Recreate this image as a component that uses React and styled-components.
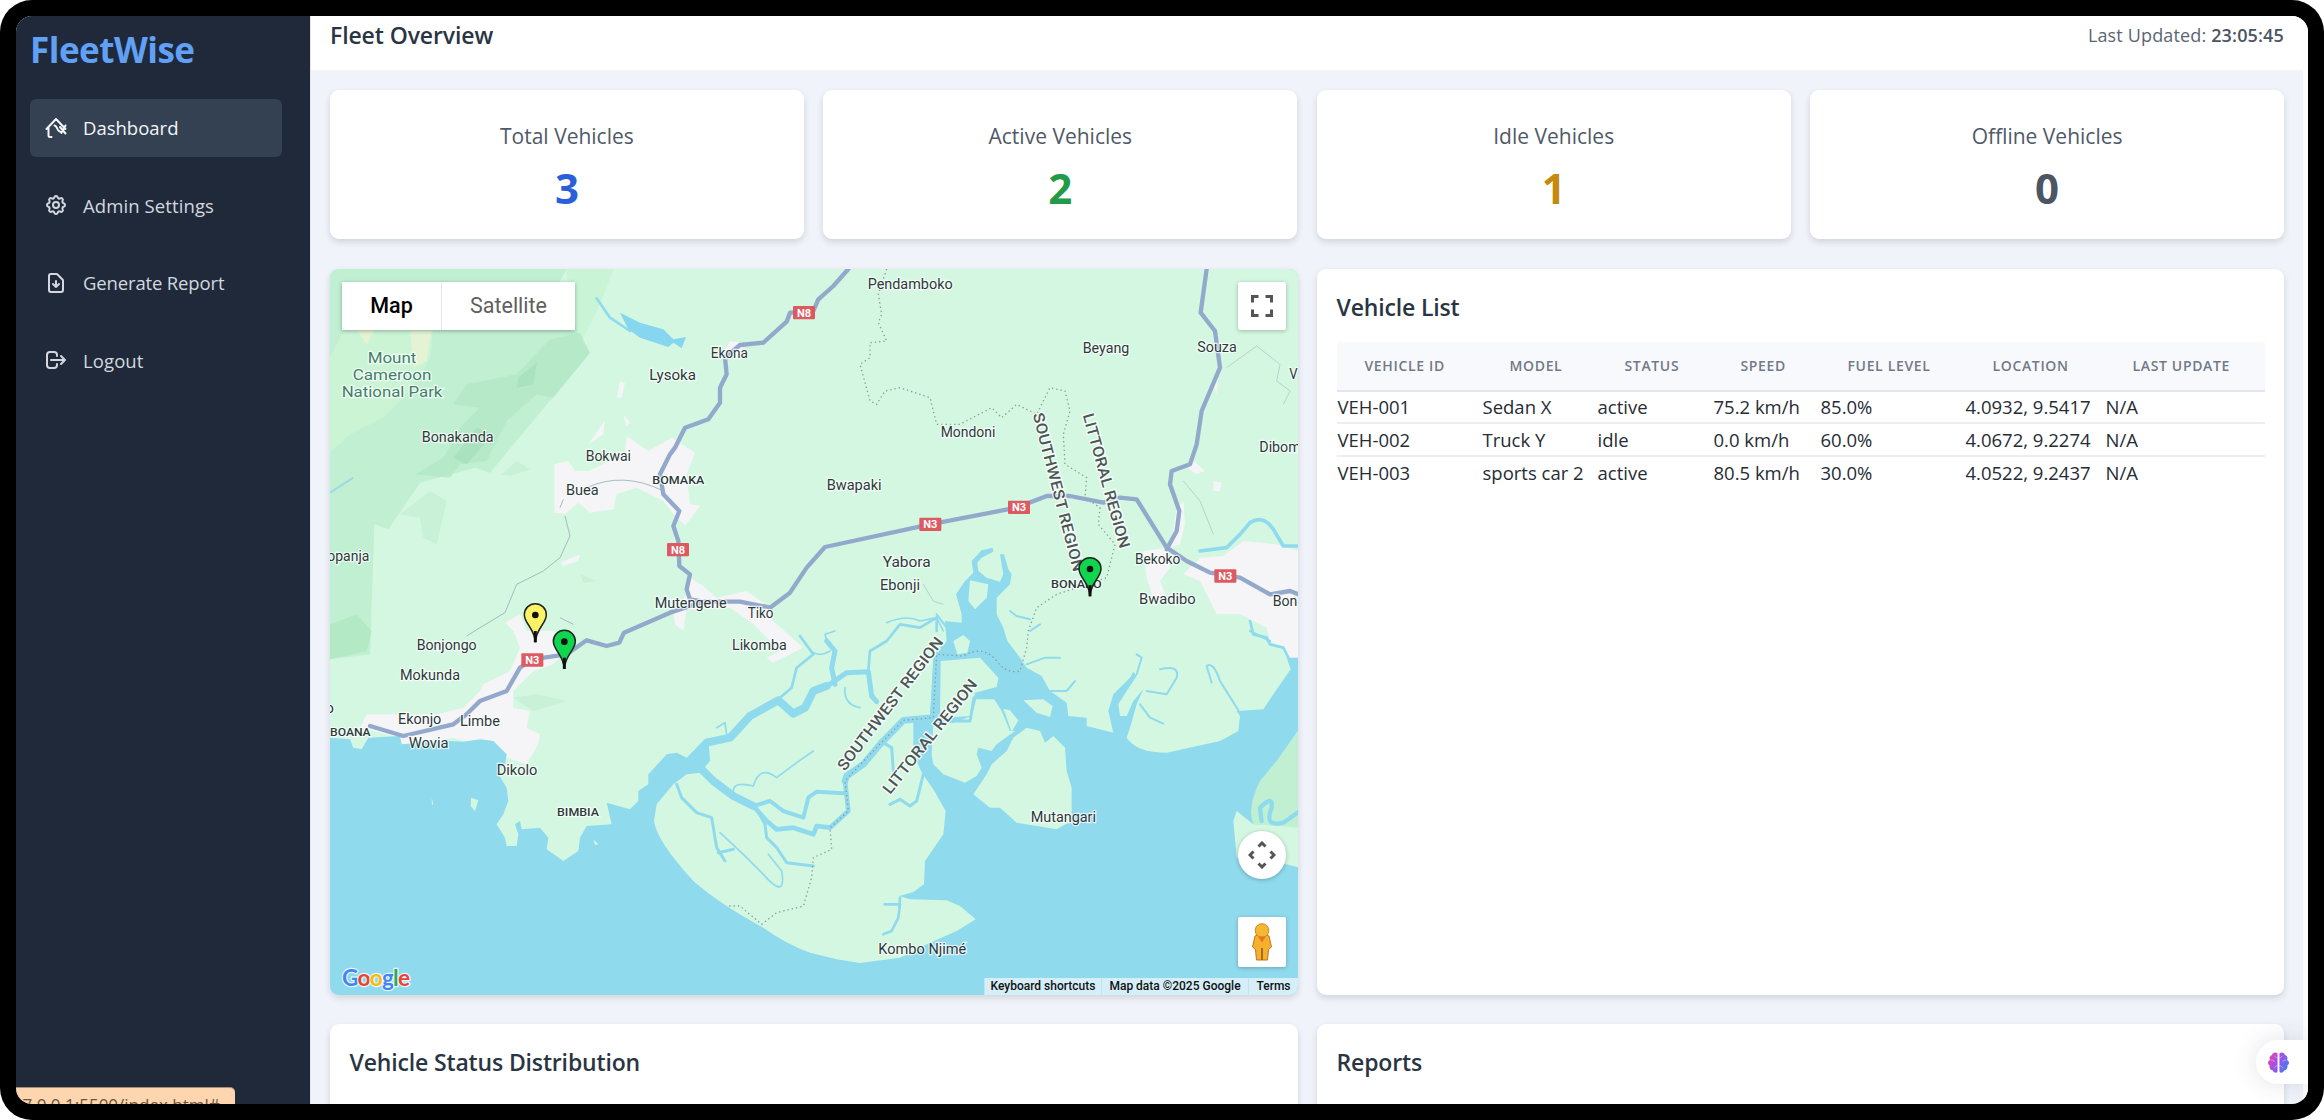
import React from 'react';
import styled, { createGlobalStyle } from 'styled-components';
import { HiOutlineCog, HiOutlineDocumentDownload, HiOutlineLogout } from 'react-icons/hi';

const GlobalStyle = createGlobalStyle`
  *, *::before, *::after { box-sizing: border-box; }
  body { margin: 0; background: #fff; font-family: "Open Sans", "Noto Sans", sans-serif; }
  h1, h2, h3, p { margin: 0; }
`;

const Bezel = styled.div`
  width: 2324px;
  height: 1120px;
  padding: 16px;
  background: #000;
  border-radius: 32px;
  overflow: hidden;
`;

const Screen = styled.div`
  position: relative;
  display: flex;
  height: 1088px;
  border-radius: 16px;
  overflow: hidden;
  background: #f0f3f9;
`;

const Sidebar = styled.aside`
  flex: none;
  width: 295px;
  padding: 13px 14px;
  background: #1f293a;
  border-right: 1px solid #e4e7ec;
`;

const Brand = styled.h1`
  margin-bottom: 27.5px;
  font-size: 35px;
  font-weight: 700;
  line-height: 42px;
  letter-spacing: -0.5px;
  color: #60a0f5;
`;

const Nav = styled.nav`
  display: flex;
  flex-direction: column;
  gap: 19.5px;
`;

const NavItem = styled.a`
  display: flex;
  align-items: center;
  gap: 15px;
  width: 252px;
  height: 58px;
  padding-left: 14px;
  border-radius: 6px;
  background: ${(p) => (p.$active ? '#334153' : 'transparent')};
  color: ${(p) => (p.$active ? '#f3f5f8' : '#d3d8df')};
  font-size: 18.5px;
  letter-spacing: ${(p) => p.$track || 0}px;
  svg { flex: none; width: 24px; height: 24px; }
`;

const Main = styled.main`
  flex: none;
  width: 1992px;
  display: flex;
  flex-direction: column;
`;

const Header = styled.header`
  flex: none;
  display: flex;
  justify-content: space-between;
  height: 55px;
  padding: 1px 19px 0 19px;
  background: #fff;
  border-bottom: 1px solid #f3f5f8;
`;

const PageTitle = styled.h2`
  font-size: 23px;
  font-weight: 600;
  line-height: 36px;
  letter-spacing: -0.1px;
  color: #2a3544;
`;

const Updated = styled.p`
  font-size: 18px;
  line-height: 36px;
  letter-spacing: 0.15px;
  color: #5b6574;
  b { font-weight: 600; color: #4b5563; }
`;

const Content = styled.div`
  display: flex;
  flex-direction: column;
  gap: 29.5px;
  padding: 19px 19px 0;
`;

const StatGrid = styled.section`
  display: grid;
  grid-template-columns: repeat(4, 1fr);
  gap: 19.6px;
`;

const Card = styled.section`
  background: #fff;
  border-radius: 9px;
  box-shadow: 0 3px 6px rgba(30, 40, 60, 0.15);
`;

const StatCard = styled(Card)`
  height: 149px;
  padding-top: 28px;
  text-align: center;
`;

const StatLabel = styled.h3`
  font-size: 21px;
  font-weight: 500;
  line-height: 36px;
  color: #4f5967;
`;

const StatValue = styled.p`
  font-size: 42px;
  font-weight: 700;
  line-height: 68px;
  color: ${(p) => p.$color};
`;

const Columns = styled.div`
  display: grid;
  grid-template-columns: 968px 967px;
  justify-content: space-between;
`;

const MapPanel = styled(Card)`
  position: relative;
  height: 726px;
  overflow: hidden;
  background: #90daee;
  > svg { display: block; width: 968px; height: 726px; }
`;

const MapTypes = styled.div`
  position: absolute;
  top: 13px;
  left: 12px;
  display: flex;
  height: 48px;
  background: #fff;
  box-shadow: 0 1px 4px rgba(0, 0, 0, 0.3);
`;

const MapType = styled.button`
  width: ${(p) => p.$w}px;
  padding: 0;
  border: 0;
  border-left: ${(p) => (p.$active ? '0' : '1px solid #e6e6e6')};
  background: none;
  font: ${(p) => (p.$active ? 500 : 400)} 21.5px Roboto, sans-serif;
  color: ${(p) => (p.$active ? '#000' : '#5f5f5f')};
`;

const MapControl = styled.button`
  position: absolute;
  top: ${(p) => p.$top}px;
  right: 12px;
  display: grid;
  place-items: center;
  width: 48px;
  height: ${(p) => p.$h || 48}px;
  padding: 0;
  border: 0;
  border-radius: ${(p) => (p.$round ? '50%' : '2px')};
  background: #fff;
  box-shadow: 0 1px 4px rgba(0, 0, 0, 0.25);
`;

const Attribution = styled.div`
  position: absolute;
  right: 0;
  bottom: 0;
  display: flex;
  height: 17px;
  font: 500 12px/17px Roboto, sans-serif;
  color: #111;
`;

const Credit = styled.span`
  width: ${(p) => p.$w}px;
  text-align: center;
  background: #d5eef7;
  border-left: 1px solid #c3e4ef;
`;

const ListPanel = styled(Card)`
  height: 726px;
  padding: 20px 19.5px;
`;

const PanelTitle = styled.h3`
  font-size: 23px;
  font-weight: 600;
  line-height: 36px;
  letter-spacing: -0.15px;
  color: #2a3544;
`;

const Table = styled.table`
  width: 928px;
  margin-top: 17px;
  border-collapse: collapse;
  table-layout: fixed;
  thead tr { height: 49px; background: #f8f9fc; border-bottom: 2px solid #e3e6eb; }
  tbody tr { height: 32.8px; }
  tbody tr + tr { border-top: 2px solid #eceef1; }
`;

const Th = styled.th`
  width: ${(p) => p.$w}px;
  padding: 0 0 0 28px;
  text-align: left;
  font-size: 14px;
  font-weight: 600;
  line-height: 20px;
  letter-spacing: 0.65px;
  color: #717a88;
  white-space: nowrap;
`;

const Td = styled.td`
  padding: 0 0 0 1px;
  font-size: 18.5px;
  line-height: 26px;
  color: #262c35;
  white-space: nowrap;
`;

const BottomPanel = styled(Card)`
  height: 120px;
  padding: 20px 19.5px;
`;

const ScrollTrack = styled.div`
  width: 5px;
  background: #fcfdfe;
`;

const StatusBubble = styled.div`
  position: absolute;
  left: 0;
  bottom: 0;
  width: 219px;
  height: 17px;
  overflow: hidden;
  border-top: 1px solid #a58d78;
  border-top-right-radius: 5px;
  background: #fdd5ae;
  color: #6b5440;
  font-size: 17px;
  line-height: 35px;
  white-space: nowrap;
  span { display: block; margin: -1px 0 0 -13px; }
`;

const Assistant = styled.button`
  position: absolute;
  right: 0;
  bottom: 20px;
  display: flex;
  align-items: center;
  width: 52px;
  height: 44px;
  padding: 0 0 0 11px;
  border: 0;
  border-radius: 22px 0 0 22px;
  background: #fff;
  box-shadow: 0 0 24px rgba(60, 60, 100, 0.14);
`;

const WATER = '#90daee';
const LAND = '#d3f7e1';
const URBAN = '#f5f4f6';
const ROAD = '#93a9cb';

const HomeIcon = () => (
  <svg viewBox="0 0 24 24" fill="none" stroke="currentColor" strokeWidth="2" strokeLinecap="round" strokeLinejoin="round">
    <path d="M2.500 13L12 3l9.500 10M4.500 11.500v8a1.500 1.500 0 001.500 1.500h1.500M10.500 9.500c1.500 0 2 1.500 3.500 4.500 1.500 2.500 3.500 1 3.500 3M16 11l5.500 6.500M21.500 9.500l-3 6" />
  </svg>
);

const BrainIcon = () => (
  <svg width="23" height="23" viewBox="0 0 24 24">
    <defs>
      <linearGradient id="brain" x1="0" y1="0" x2="1" y2="0.600">
        <stop offset="0" stopColor="#f0508c" />
        <stop offset="0.450" stopColor="#b04ae0" />
        <stop offset="1" stopColor="#4a7af0" />
      </linearGradient>
    </defs>
    <path fill="url(#brain)" d="M11 2.500C9 .5 5.500 1.500 5.300 4.300 2.800 5 2 7.500 3.200 9.300.4 10.500.4 14 2.800 15.200 2 18 3.800 20 5.800 20.200 7 23 10 23.500 11 21.500zM13 2.500c2-2 5.500-1 5.700 1.800 2.500.7 3.300 3.200 2.100 5 2.800 1.200 2.800 4.700.4 5.900.8 2.800-1 4.800-3 5-1.200 2.800-4.200 3.300-5.200 1.300z" />
    <path fill="none" stroke="#fff" strokeOpacity=".4" strokeWidth="1" d="M4 9.500c2-.5 3.500.5 3.500 2M11 7c-1.500 0-2.500-.5-3-2M11 15.500c-2 0-3 1-3.500 2.500M20 9.500c-2-.5-3.500.5-3.500 2M13 7c1.500 0 2.500-.5 3-2M13 15.500c2 0 3 1 3.500 2.500" />
  </svg>
);

const Place = ({ x, y, w, children, size = 42, color = '#2c3a3a', caps }) => (
  <text
    x={x}
    y={y}
    textLength={w}
    lengthAdjust="spacingAndGlyphs"
    fontSize={size}
    fontWeight={caps ? 500 : 400}
    fill={color}
    stroke="#fff"
    strokeOpacity=".75"
    strokeWidth="7"
    paintOrder="stroke"
  >
    {children}
  </text>
);

const Shield = ({ x, y, children }) => (
  <g>
    <rect x={x - 33} y={y - 20} width="66" height="40" rx="3" fill="#dc5a60" />
    <text x={x} y={y + 12} textAnchor="middle" fontSize="33" fontWeight="700" fill="#fff">{children}</text>
  </g>
);

const Pin = ({ x, y, fill }) => (
  <g transform={`translate(${x} ${y})`}>
    <path d="M0 82C-2 40-33 26-33-1a33 33 0 0166 0C33 26 2 40 0 82z" fill={fill} stroke="#222" strokeWidth="4.500" />
    <path d="M0 48v34" stroke="#111" strokeWidth="9" />
    <circle r="10" fill="#111" />
  </g>
);

const Region = ({ x, y, angle, w, children }) => (
  <text
    transform={`translate(${x} ${y}) rotate(${angle})`}
    textLength={w}
    lengthAdjust="spacingAndGlyphs"
    fontSize="46"
    fontWeight="500"
    fill="#4c5655"
    stroke="#fff"
    strokeOpacity=".8"
    strokeWidth="8"
    paintOrder="stroke"
  >
    {children}
  </text>
);

const MapCanvas = () => (
  <svg viewBox="30 24 2904 2178" fontFamily="Roboto, sans-serif">
    <rect x="30" y="24" width="2904" height="2178" fill={LAND} />

    {/* national park and forest */}
    <path fill="#c0f0d1" d="M30 24H740L720 60L790 250L810 275L510 635L465 620L300 665L205 805L163 790L150 1180L30 1195z" />
    <path fill="#caf4d6" d="M740 24H880L840 130L785 240L745 110z" />
    <path fill="#cbf4d5" d="M30 290L75 200H340L330 290L270 390L190 470L90 520L30 575z" />
    <path fill="#e3f3d3" d="M270 210H335L320 300L280 320zM110 205H165L140 250z" />
    <path fill="#aee5c1" d="M590 340L690 235L780 215L810 275L700 410L650 400L560 480L500 600L420 610L390 650L285 640L370 590L420 500L480 440L400 430L440 370z" opacity=".6" />
    <path fill="#9fdab5" d="M595 350L650 305L640 370L590 380zM400 590L470 500L520 520L440 610z" opacity=".5" />
    <path fill="#bdebcd" d="M240 760L330 690L380 720L350 850L310 830L300 770z" opacity=".5" />
    <path fill="#aee5c1" d="M30 1090L110 1060L155 1110L140 1170L30 1195z" opacity=".7" />
    <path fill="#bdebcd" d="M545 640L590 600L630 625L570 645zM780 940L830 960L790 965zM580 1310L650 1300L740 1320L640 1350z" opacity=".5" />

    {/* towns */}
    <g fill={URBAN}>
      <path d="M703 610L745 600L765 630L805 630L915 580L920 525L985 570L1055 530L1125 575L1100 640L1110 730L1140 735L1095 795L1060 760L1030 720L950 680L890 700L880 745L810 755L775 725L735 760L703 755z" />
      <path d="M890 410L900 362L915 365L905 410zM805 550L855 478L850 520zM910 460L930 485L918 495zM720 905L780 880L775 900L730 915z" />
      <path d="M1110 950L1150 975L1190 1010L1280 990L1350 1040L1360 1080L1450 1160L1360 1205L1340 1190L1380 1170L1300 1090L1230 1040L1100 1045L1090 1110L1065 1090L1060 1050L1100 1000z" />
      <path d="M555 1085L600 1060L620 1110L700 1110L760 1150L700 1210L640 1230L580 1290L580 1340L630 1350L620 1400L660 1420L655 1450L620 1510L560 1490L520 1440L430 1440L400 1430L245 1450L240 1430L120 1400L140 1360L350 1360L430 1340L480 1290L490 1270L570 1230L600 1160L580 1110z" />
      <path d="M2640 890L2710 885L2770 840L2870 850L2940 870V1195L2900 1190L2885 1160L2850 1140L2840 1100L2760 1060L2690 1060L2640 960L2590 940zM2470 870L2540 860L2550 920L2520 960L2545 1020L2500 1015L2480 950z" />
      <path d="M2570 740L2590 720L2595 790L2580 850L2550 860zM2610 590L2655 630L2625 640L2605 620zM2680 660L2705 665L2700 690L2680 690zM2680 370L2695 350L2690 400z" />
      <path d="M1230 240L1270 245L1260 290L1210 280z" />
    </g>

    {/* open sea */}
    <path
      fill={WATER}
      d="M30 1430L90 1435L100 1460L125 1465L145 1430L240 1425L245 1450L390 1440L430 1442L480 1435L520 1440L560 1480L555 1510L530 1530L560 1580L565 1620L550 1660L530 1690L555 1730L560 1755L590 1755L595 1720L585 1690L600 1680L605 1705L660 1700L685 1730L680 1765L730 1800L775 1770L780 1730L800 1695L875 1690L860 1625L930 1645L955 1620V1590L985 1570V1540L1040 1480L1070 1475L1100 1490L1140 1450L1165 1430L1170 1500L1140 1535L1100 1540L1060 1570L1010 1630L1002 1680Q1010 1740 1120 1860Q1200 1930 1330 2000Q1400 2050 1470 2075L1550 2095L1620 2106L1740 2090L1820 2050L1910 2010L1967 1975L1920 1935L1880 1918L1770 1915L1738 1905L1780 1893L1812 1870L1815 1800L1870 1720L1877 1650L1840 1585L1808 1540L1780 1480V1380L1830 1370L1840 1200L1848 1172L1880 1140L1875 1080L1925 1085L1925 1060L1908 1000L1935 960L1960 935L1955 900L1985 868L2018 860L2020 872L1985 890L1972 905L1975 930L2000 950L2040 962L2050 940L2040 880L2052 880L2065 925L2075 940L2070 970L2030 1010V1060L2050 1100L2062 1140L2100 1190L2120 1220L2165 1245L2190 1290L2240 1325L2245 1365L2300 1370V1395L2380 1415L2365 1350L2380 1300L2430 1250L2440 1232L2450 1245L2420 1290L2395 1330L2400 1365H2420L2440 1320L2470 1285L2450 1330L2430 1400L2420 1430Q2450 1475 2540 1475L2700 1440L2755 1410L2760 1365L2750 1350L2830 1345L2860 1300L2912 1225L2900 1190H2940V2210H30z"
    />
    <path fill={LAND} d="M2940 1690L2940 1820L2880 1805L2750 1790L2740 1680L2750 1650L2800 1690z" />
    <path fill="#c0f0d1" d="M2940 1400L2870 1500L2820 1560Q2780 1640 2800 1690L2940 1700z" />

    {/* delta islands */}
    <g fill={LAND}>
      <path d="M1835 1480L1840 1510L1870 1540L1935 1565L1970 1545L1985 1520L1970 1480L1975 1460L2015 1470L2030 1450L2085 1410L2070 1410L2045 1350L2020 1310L1970 1310L1955 1365L1900 1385L1840 1390z" />
      <path d="M1862 1200L1980 1190L2035 1250L2030 1278L1965 1295L1950 1365L1860 1372z" />
      <path d="M1960 1600L2010 1640L2040 1640L2090 1685L2210 1705L2255 1680V1580L2240 1530L2235 1460L2200 1425L2175 1445L2160 1410L2120 1400L2080 1430L2060 1470L2015 1510L2000 1540z" />
      <path d="M1900 1140L1930 1122L1950 1140L1942 1175L1912 1180zM2110 1318L2170 1315L2198 1335L2190 1368L2150 1355zM2050 1343L2070 1348L2095 1378L2075 1412z" />
      <path d="M1950 1038L2005 1050L2000 1090L1965 1125L1945 1100z" transform="translate(0 -80)" />
      <path d="M453 1610L475 1618L465 1650L452 1635zM335 1610L340 1630L336 1632zM820 1735L835 1750L825 1752z" />
    </g>

    {/* rivers */}
    <g fill="none" stroke={WATER} strokeLinejoin="round" strokeLinecap="round">
      <path strokeWidth="24" d="M1120 1490L1160 1445L1230 1430L1290 1365L1375 1318L1420 1358L1455 1340L1480 1290L1520 1275" />
      <path strokeWidth="15" d="M1480 1290L1525 1273L1580 1235L1645 1232L1655 1305L1670 1322M1545 1270L1535 1220L1545 1170L1520 1140" />
      <path strokeWidth="24" d="M1130 1510L1180 1560L1240 1605L1300 1635" />
      <path strokeWidth="14" d="M1300 1635L1340 1680L1370 1705L1420 1700L1480 1720L1490 1695L1530 1700L1585 1650L1575 1560" />
      <path strokeWidth="20" d="M1575 1560L1580 1545L1630 1510L1680 1450L1750 1378L1840 1370L1850 1190" />
      <path strokeWidth="12" d="M1300 1635L1350 1620L1390 1650L1450 1670L1465 1610L1490 1592L1570 1597" />
      <path strokeWidth="9" d="M1070 1570L1085 1610L1130 1655L1175 1670L1190 1760L1215 1800M1195 1775L1240 1765M1310 1645L1335 1690L1340 1730L1370 1760L1400 1805L1480 1815" />
      <path strokeWidth="9" d="M1680 1440L1715 1460L1720 1530M1860 1380H1950L1962 1310L2030 1310L2050 1340M1810 1540L1790 1620L1770 1635L1740 1615L1710 1630" />
      <path strokeWidth="8" d="M1694 1930L1740 1930L1735 1970L1715 2010L1690 2020M1740 1910L1738 1940M1645 1230L1650 1170L1700 1140L1740 1090L1800 1100L1850 1070M1440 1125L1480 1180L1430 1220L1415 1280L1380 1310" />
      <path strokeWidth="5" d="M1520 1140L1515 1120L1545 1110M1700 1085Q1760 1060 1800 1080L1850 1070L1870 1110M1240 1590Q1240 1560 1300 1575Q1320 1510 1370 1550L1430 1505L1480 1470M1200 1715L1270 1780L1330 1840Q1400 1920 1385 1830L1345 1780M1190 1400L1215 1385L1220 1420M1470 1170Q1500 1190 1530 1170M1575 1280Q1570 1330 1620 1340" />
      <path strokeWidth="6" d="M2700 1260L2755 1348M2700 1260Q2680 1200 2660 1215L2675 1265M2450 1240L2465 1190L2450 1180M2480 1290L2540 1300L2570 1250Q2580 1210 2520 1225M2460 1330L2490 1370L2530 1388M2120 1210L2175 1190L2220 1190M2190 1290L2240 1290L2265 1260M2070 1050L2090 1065L2130 1075M2130 1110L2160 1090M2790 1110L2850 1140M1850 1060L1880 1100" />
      <path strokeWidth="13" d="M2825 1680L2820 1640Q2860 1600 2855 1640Q2830 1700 2890 1685L2940 1650" />
      <path strokeWidth="11" d="M2640 870L2720 860L2760 820L2790 785Q2830 760 2860 805L2890 855H2940" />
      <path strokeWidth="8" d="M2790 1080L2800 1120L2840 1130L2850 1150L2890 1160L2905 1190M1850 1070L1850 1110M830 112L870 170L930 210" />
    </g>
    <path fill="#85d6ee" d="M900 155L960 185L1030 205L1060 235L1098 228L1085 262L1060 245L1045 258L960 230L925 205z" />
    <path stroke="#9ad9ea" strokeWidth="6" d="M30 695L100 650" />

    {/* minor roads */}
    <g fill="none" stroke="#a9b9bd" strokeWidth="3">
      <path d="M735 765L750 825L720 890L670 930L590 970L555 1055L480 1100L440 1125M720 1070L760 1090M730 715L720 740M800 680Q910 630 1030 690" />
      <path d="M2720 320L2810 255L2880 310L2870 360L2910 390L2890 430M2590 660L2640 720L2680 820M1810 970L1840 1020L1870 1030" stroke="#b9d3c9" />
    </g>

    {/* regional boundary */}
    <g fill="none" stroke="#8b9a9b" strokeWidth="4" strokeDasharray="4 9">
      <path d="M1700 24L1675 100L1685 160L1675 185L1700 240L1650 245V290L1620 310L1650 420L1670 430L1695 390L1740 380L1830 410L1850 490H1920L2015 440L2045 470L2090 430L2150 460L2190 380L2235 390L2250 450L2230 520L2235 610L2300 650L2295 710L2340 740L2335 790L2385 850L2360 950L2210 1000L2150 1040L2125 1110L2120 1160L2100 1230Q2060 1240 2030 1200Q1990 1150 1930 1185L1850 1180L1840 1370L1750 1378L1640 1490L1575 1560L1585 1650L1530 1700L1535 1765L1480 1790L1475 1850L1450 1935L1370 1955L1325 1990L1260 1935H1220" />
    </g>

    {/* national roads */}
    <g fill="none" stroke={ROAD} strokeWidth="13" strokeLinejoin="round" strokeLinecap="round">
      <path d="M1585 24L1540 75L1495 115L1480 150L1410 155L1400 182L1330 245L1260 252L1215 290L1220 340L1200 380V425L1165 475L1095 500L1065 560L1050 580L1020 640L1030 700L1078 750L1060 795L1075 840L1078 915L1110 940L1100 985L1110 1015L1150 1022" />
      <path d="M150 1395L250 1425L400 1390L440 1360L480 1320L560 1290L600 1220L635 1195L740 1180L800 1138L860 1155L898 1145L912 1115L1050 1055L1150 1022H1260L1350 1040L1410 995L1460 920L1515 858L1830 790L2090 740L2180 705L2250 705L2350 725L2400 710L2450 715L2540 860L2600 900L2670 935L2760 950L2850 1000L2910 990L2935 1000" />
      <path d="M2660 24L2642 155L2685 210L2700 320L2645 450L2630 550L2610 610L2555 630L2550 670L2578 750L2570 810L2540 865" />
    </g>

    <Shield x={1452} y={155}>N8</Shield>
    <Shield x={1074} y={866}>N8</Shield>
    <Shield x={1831} y={790}>N3</Shield>
    <Shield x={2097} y={739}>N3</Shield>
    <Shield x={2716} y={945}>N3</Shield>
    <Shield x={637} y={1197}>N3</Shield>

    <Place x={143} y={306} w={146} size={44} color="#3f7f6a">Mount</Place>
    <Place x={98} y={357} w={236} size={44} color="#3f7f6a">Cameroon</Place>
    <Place x={65} y={409} w={302} size={44} color="#3f7f6a">National Park</Place>
    <Place x={305} y={542} w={216}>Bonakanda</Place>
    <Place x={988} y={356} w={140}>Lysoka</Place>
    <Place x={1172} y={290} w={112}>Ekona</Place>
    <Place x={797} y={600} w={136}>Bokwai</Place>
    <Place x={738} y={703} w={98}>Buea</Place>
    <Place x={997} y={668} w={156} size={34} caps>BOMAKA</Place>
    <Place x={22} y={899} w={126}>opanja</Place>
    <Place x={1004} y={1040} w={216}>Mutengene</Place>
    <Place x={1283} y={1072} w={77}>Tiko</Place>
    <Place x={1643} y={84} w={255}>Pendamboko</Place>
    <Place x={2288} y={277} w={140}>Beyang</Place>
    <Place x={2632} y={274} w={118}>Souza</Place>
    <Place x={2908} y={355} w={25}>V</Place>
    <Place x={1862} y={529} w={164}>Mondoni</Place>
    <Place x={2818} y={574} w={124}>Dibom</Place>
    <Place x={1520} y={687} w={165}>Bwapaki</Place>
    <Place x={1688} y={917} w={144}>Yabora</Place>
    <Place x={1680} y={986} w={120}>Ebonji</Place>
    <Place x={2193} y={982} w={152} size={34} caps>BONABO</Place>
    <Place x={2445} y={908} w={136}>Bekoko</Place>
    <Place x={2457} y={1028} w={170}>Bwadibo</Place>
    <Place x={2858} y={1036} w={74}>Bon</Place>
    <Place x={290} y={1168} w={180}>Bonjongo</Place>
    <Place x={240} y={1258} w={180}>Mokunda</Place>
    <Place x={16} y={1355} w={26}>o</Place>
    <Place x={234} y={1390} w={130}>Ekonjo</Place>
    <Place x={420} y={1395} w={120}>Limbe</Place>
    <Place x={30} y={1424} w={122} size={34} caps>BOANA</Place>
    <Place x={266} y={1462} w={120}>Wovia</Place>
    <Place x={530} y={1541} w={122}>Dikolo</Place>
    <Place x={711} y={1665} w={126} size={34} caps>BIMBIA</Place>
    <Place x={1236} y={1168} w={164}>Likomba</Place>
    <Place x={2132} y={1682} w={196}>Mutangari</Place>
    <Place x={1675} y={2079} w={264}>Kombo Njimé</Place>

    <Region x={2138} y={460} angle={75.5} w={490}>SOUTHWEST REGION</Region>
    <Region x={2288} y={462} angle={74.5} w={418}>LITTORAL REGION</Region>
    <Region x={1574} y={1532} angle={-52.5} w={490}>SOUTHWEST REGION</Region>
    <Region x={1710} y={1602} angle={-51.5} w={424}>LITTORAL REGION</Region>

    <Pin x={646} y={1062} fill="#fbf266" />
    <Pin x={733} y={1142} fill="#0fd54f" />
    <Pin x={2310} y={924} fill="#0fd54f" />

    <text x="66" y="2174" fontFamily="Lato, sans-serif" fontSize="68" fontWeight="700" textLength="204" stroke="#fff" strokeOpacity=".8" strokeWidth="7" paintOrder="stroke">
      <tspan fill="#4285f4">G</tspan>
      <tspan fill="#ea4335">o</tspan>
      <tspan fill="#fbbc05">o</tspan>
      <tspan fill="#4285f4">g</tspan>
      <tspan fill="#34a853">l</tspan>
      <tspan fill="#ea4335">e</tspan>
    </text>
  </svg>
);

const stats = [
  ['Total Vehicles', '3', '#2b5fd9'],
  ['Active Vehicles', '2', '#229a4a'],
  ['Idle Vehicles', '1', '#c48a10'],
  ['Offline Vehicles', '0', '#4b5563'],
];

const columns = [
  ['Vehicle ID', 145],
  ['Model', 115],
  ['Status', 116],
  ['Speed', 107],
  ['Fuel Level', 145],
  ['Location', 140],
  ['Last Update', 160],
];

const vehicles = [
  ['VEH-001', 'Sedan X', 'active', '75.2 km/h', '85.0%', '4.0932, 9.5417', 'N/A'],
  ['VEH-002', 'Truck Y', 'idle', '0.0 km/h', '60.0%', '4.0672, 9.2274', 'N/A'],
  ['VEH-003', 'sports car 2', 'active', '80.5 km/h', '30.0%', '4.0522, 9.2437', 'N/A'],
];

export default function App() {
  return (
    <>
      <GlobalStyle />
      <Bezel>
        <Screen>
          <Sidebar>
            <Brand>FleetWise</Brand>
            <Nav>
              <NavItem $active><HomeIcon />Dashboard</NavItem>
              <NavItem $track={0.1}><HiOutlineCog />Admin Settings</NavItem>
              <NavItem $track={-0.15}><HiOutlineDocumentDownload />Generate Report</NavItem>
              <NavItem $track={0.1}><HiOutlineLogout />Logout</NavItem>
            </Nav>
          </Sidebar>
          <Main>
            <Header>
              <PageTitle>Fleet Overview</PageTitle>
              <Updated>Last Updated: <b>23:05:45</b></Updated>
            </Header>
            <Content>
              <StatGrid>
                {stats.map(([label, value, color]) => (
                  <StatCard key={label}>
                    <StatLabel>{label}</StatLabel>
                    <StatValue $color={color}>{value}</StatValue>
                  </StatCard>
                ))}
              </StatGrid>
              <Columns>
                <MapPanel>
                  <MapCanvas />
                  <MapTypes>
                    <MapType $active $w={99}>Map</MapType>
                    <MapType $w={134}>Satellite</MapType>
                  </MapTypes>
                  <MapControl $top={13}>
                    <svg width="22" height="22" viewBox="0 0 22 22" fill="none" stroke="#555" strokeWidth="3">
                      <path d="M1.500 7.500v-6h6M14.500 1.500h6v6M20.500 14.500v6h-6M7.500 20.500h-6v-6" />
                    </svg>
                  </MapControl>
                  <MapControl $top={562} $round>
                    <svg width="28" height="28" viewBox="0 0 28 28" fill="none" stroke="#555" strokeWidth="3">
                      <path d="M10.500 5.500L14 2l3.500 3.500M10.500 22.500L14 26l3.500-3.500M5.500 10.500L2 14l3.500 3.500M22.500 10.500L26 14l-3.500 3.500" />
                    </svg>
                  </MapControl>
                  <MapControl $top={648} $h={50}>
                    <svg width="20" height="38" viewBox="0 0 20 38">
                      <path d="M3 13q7-4 14 0l2.500 11-3 2.500L15.500 37h-11L3.500 26.500.5 24z" fill="#f5b02e" stroke="#b97a1c" strokeWidth="1" />
                      <path d="M10 25v12" stroke="#8a5a1a" strokeWidth="1.500" />
                      <circle cx="10" cy="7.500" r="6.800" fill="#f7b733" stroke="#c98a22" strokeWidth="1" />
                      <path d="M6 13.500h8l-4 6z" fill="#e8761f" />
                    </svg>
                  </MapControl>
                  <Attribution>
                    <Credit $w={117}>Keyboard shortcuts</Credit>
                    <Credit $w={147}>Map data ©2025 Google</Credit>
                    <Credit $w={50}>Terms</Credit>
                  </Attribution>
                </MapPanel>
                <ListPanel>
                  <PanelTitle>Vehicle List</PanelTitle>
                  <Table>
                    <thead>
                      <tr>{columns.map(([name, w]) => <Th key={name} $w={w}>{name.toUpperCase()}</Th>)}</tr>
                    </thead>
                    <tbody>
                      {vehicles.map((row) => (
                        <tr key={row[0]}>{row.map((cell, i) => <Td key={i}>{cell}</Td>)}</tr>
                      ))}
                    </tbody>
                  </Table>
                </ListPanel>
              </Columns>
              <Columns>
                <BottomPanel><PanelTitle>Vehicle Status Distribution</PanelTitle></BottomPanel>
                <BottomPanel><PanelTitle>Reports</PanelTitle></BottomPanel>
              </Columns>
            </Content>
          </Main>
          <ScrollTrack />
          <StatusBubble><span>127.0.0.1:5500/index.html#</span></StatusBubble>
          <Assistant><BrainIcon /></Assistant>
        </Screen>
      </Bezel>
    </>
  );
}
